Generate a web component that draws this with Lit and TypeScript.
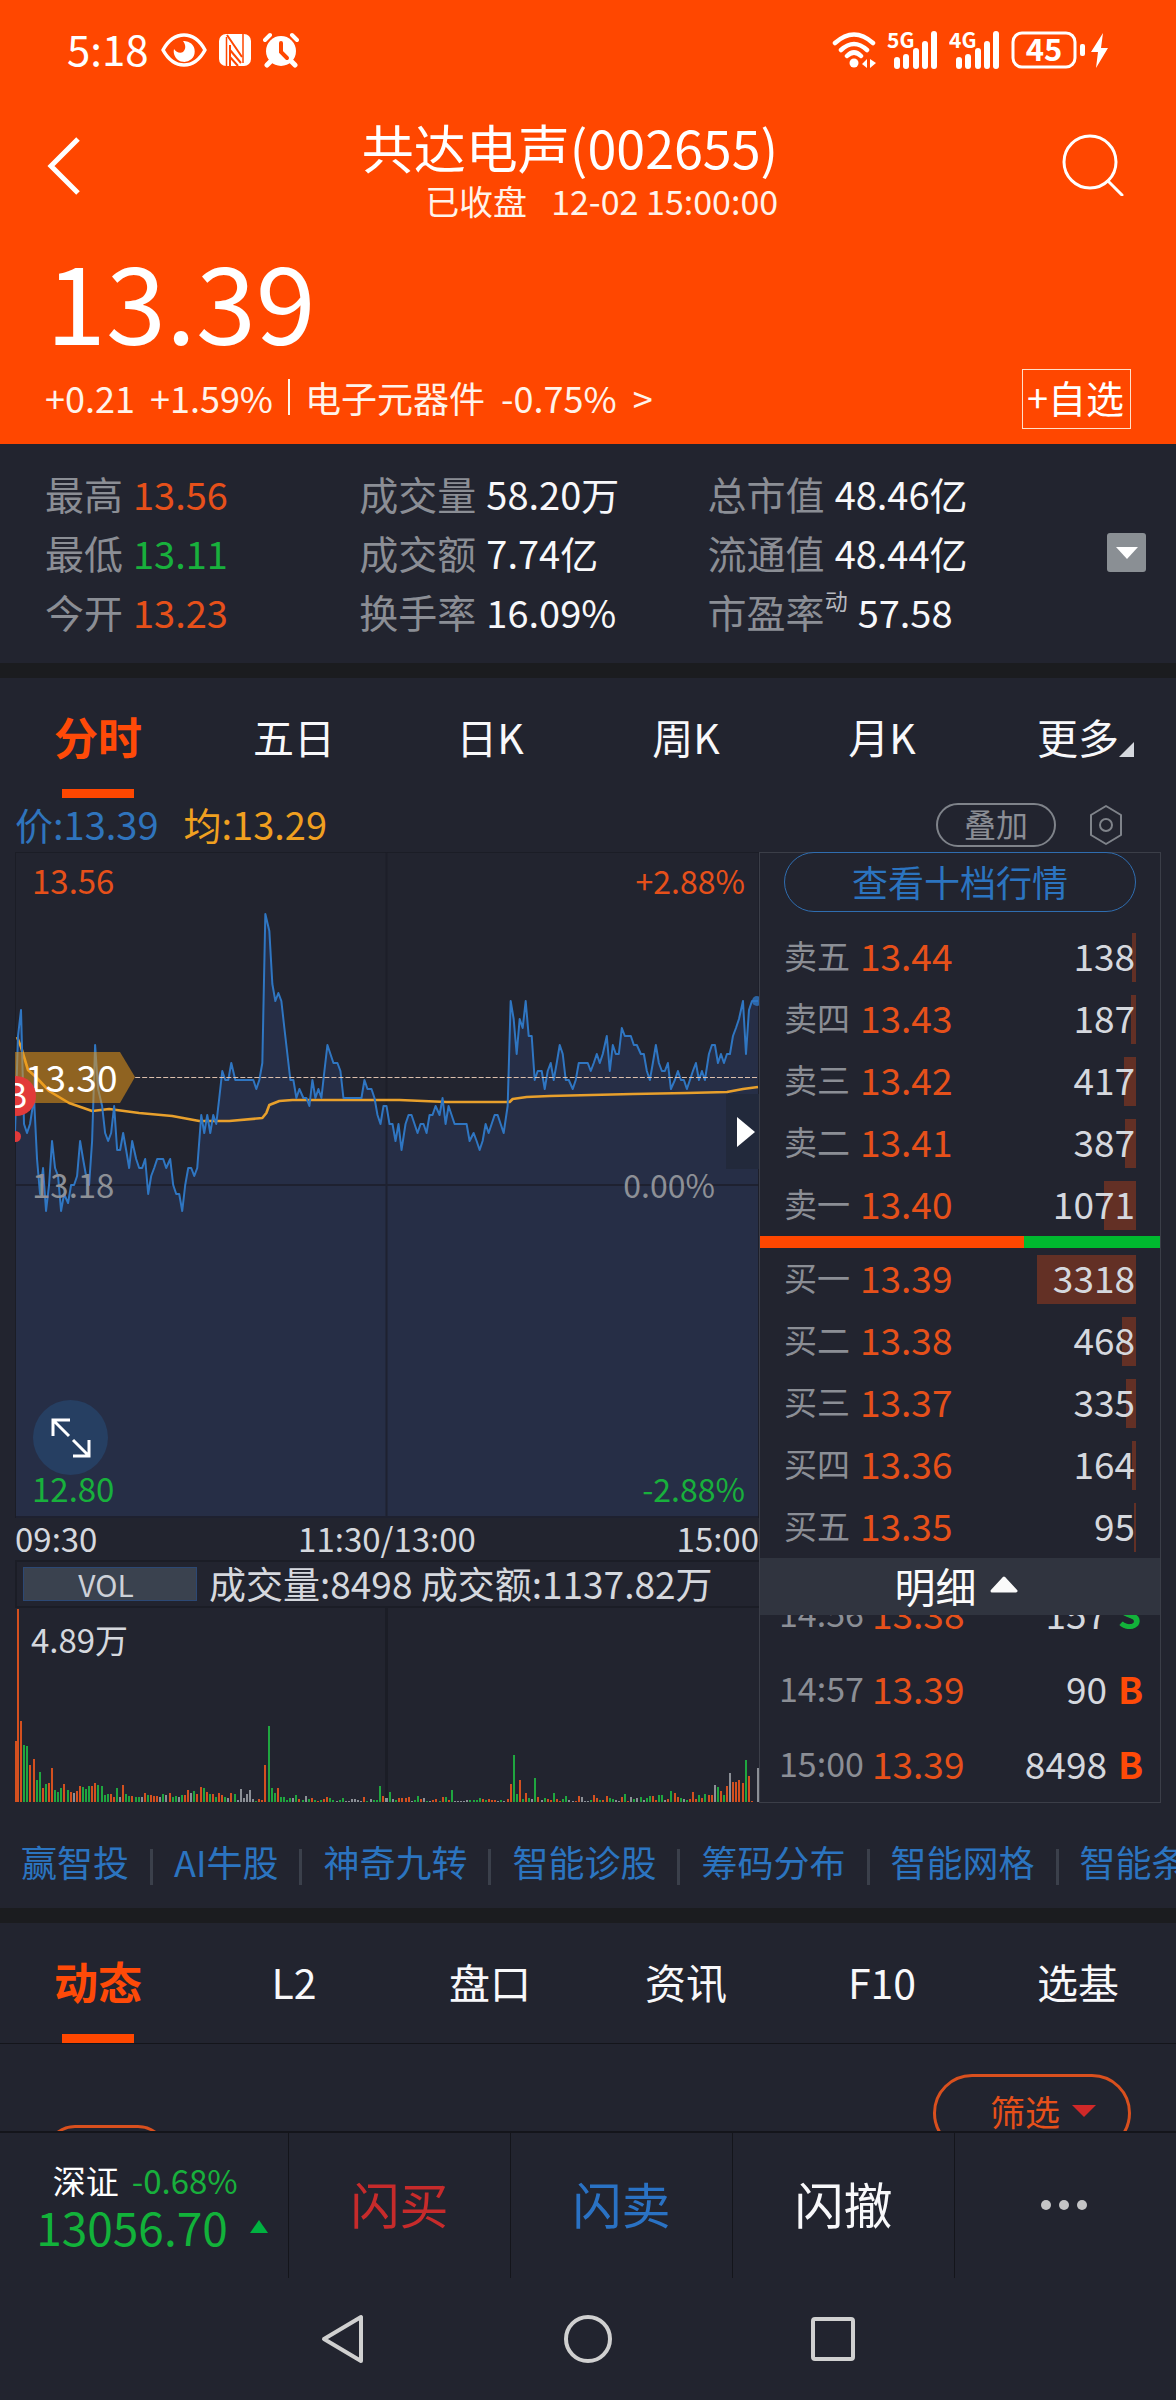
import { LitElement, html, css, svg } from "lit";
import { customElement, state } from "lit/decorators.js";
import { classMap } from "lit/directives/class-map.js";

/** Price per minute, in cents above the previous close of 13.18. */
const TICKS = [
  6, 17, 20, 7, 6, 7, 10, 3, -1, 2, -3, 0, 5, 2, 1, -3, -1, -2, 0, 0, 1, 5, 3, 1, 0, 5, 16, 11, 9, 6,
  5, 6, 9, 4, 4, 6, 4, 2, 5, 3, 2, 2, 3, -1, 1, 2, 3, 3, 3, 2, 3, 0, -1, -1, -3, 0, 2, 2, 1, 2,
  8, 6, 8, 6, 8, 7, 10, 13, 12, 12, 14, 12, 12, 12, 12, 12, 12, 12, 11, 12, 14, 31, 29, 23, 21, 22, 21, 18, 15, 12,
  12, 10, 11, 10, 10, 9, 12, 10, 11, 10, 13, 16, 15, 14, 14, 13, 10, 10, 10, 10, 10, 10, 10, 12, 11, 11, 10, 8, 7, 9,
  9, 7, 7, 5, 7, 4, 7, 8, 8, 7, 6, 7, 7, 6, 8, 8, 9, 8, 10, 7, 9, 8, 7, 7, 7, 7, 7, 5, 6, 5,
  4, 5, 7, 6, 7, 8, 8, 7, 6, 9, 21, 19, 15, 19, 18, 21, 17, 17, 12, 13, 13, 11, 13, 14, 12, 14, 16, 15, 12, 12,
  11, 12, 14, 14, 14, 14, 13, 14, 15, 14, 15, 17, 13, 16, 15, 15, 18, 17, 17, 17, 16, 16, 15, 15, 13, 12, 14, 16, 14, 13,
  13, 14, 11, 12, 13, 12, 12, 11, 12, 13, 14, 12, 13, 12, 15, 16, 16, 14, 15, 14, 15, 15, 17, 18, 19, 21, 15, 20, 21, 21, 21,
];

/** Average price line, in chart units. */
const AVERAGE =
  "2,185 6,195 13,218 21,225 34,239 54,251 77,259 94,257 124,261 157,264 184,269 214,269 247,266 251,261 254,253 264,249 277,248 384,248 431,250 494,250 497,247 511,245 534,244 617,242 671,241 711,240 727,237 742,235";

/** Volume per minute: direction (r up, g down, w flat) and bar height. */
const VOLUME = (
  "r61 r193 r81 g57 g56 r37 r43 g22 g30 r14 g18 r19 r34 g12 g10 g14 r18 g12 r10 w9 r11 r16 g15 g13 g16 r16 r19 g17 g16 g7 " +
  "g8 r8 r5 g14 w5 r17 g8 g6 r6 g5 g5 w5 r9 g7 r7 r6 r6 w5 g8 w7 r9 g5 g6 w5 g7 r7 r12 w9 g11 r8 " +
  "r15 g14 r10 g8 r8 g5 r9 r7 g5 w4 r9 g8 w2 w13 w4 w8 w12 w3 g1 r3 r2 r37 g76 g14 g9 r14 g5 g5 g2 g4 " +
  "w4 g7 r3 g2 w6 g3 r4 g2 r1 g2 r3 r5 g4 g2 w1 g2 g4 w1 w1 w3 w3 w2 w1 r5 g1 w3 g2 g2 g16 r6 " +
  "w4 g10 w3 g2 r4 r4 r4 r5 w1 g2 g6 r3 w4 g1 w1 r2 r3 g1 r5 g5 r2 g12 w1 w1 w1 w1 w2 g2 g2 g2 " +
  "g4 r3 g2 r3 r2 r2 w1 g2 w1 r3 r18 g47 g8 r22 g3 r9 g4 w3 g24 r5 w2 g4 r3 r2 g9 r3 r1 g3 g6 w2 " +
  "w1 r1 r6 w5 w1 w1 g2 r7 r4 g2 r2 r6 g4 g3 w2 w1 r5 g8 r1 w5 g3 w4 g5 w2 g4 g6 r6 r2 g7 g7 " +
  "w2 r3 g11 r9 r5 g4 w3 g2 r3 r10 r3 g7 r4 g8 r7 r7 w17 g15 r11 g7 r16 w29 r20 r20 r22 r19 g42 r26 r1 w0 w34"
).split(" ");

const BAR_COLORS: Record<string, string> = { r: "#d4501f", g: "#1fa63f", w: "#8b8f96" };

const STATS = [
  ["最高", "13.56", "up"], ["成交量", "58.20万", ""], ["总市值", "48.46亿", ""],
  ["最低", "13.11", "down"], ["成交额", "7.74亿", ""], ["流通值", "48.44亿", ""],
  ["今开", "13.23", "up"], ["换手率", "16.09%", ""], ["市盈率", "57.58", ""],
];

type Level = [string, string, number, number];
const ASKS: Level[] = [
  ["卖五", "13.44", 138, 4], ["卖四", "13.43", 187, 5], ["卖三", "13.42", 417, 12],
  ["卖二", "13.41", 387, 11], ["卖一", "13.40", 1071, 32],
];
const BIDS: Level[] = [
  ["买一", "13.39", 3318, 99], ["买二", "13.38", 468, 14], ["买三", "13.37", 335, 10],
  ["买四", "13.36", 164, 4], ["买五", "13.35", 95, 2],
];
const TRADES = [
  ["14:56", "13.38", "157", "S"],
  ["14:57", "13.39", "90", "B"],
  ["15:00", "13.39", "8498", "B"],
];

const base = css`
  :host { display: block; }
  * { box-sizing: border-box; }
  button, a {
    font: inherit; color: inherit; background: none; border: 0; padding: 0; margin: 0;
    text-decoration: none; white-space: nowrap;
  }
  svg { display: block; }
  .up { color: #e6501a; }
  .down { color: #18b03c; }
`;

@customElement("status-bar")
class StatusBar extends LitElement {
  static styles = [base, css`
    .bar { display: flex; justify-content: space-between; align-items: center; height: 100px; padding: 0 67px; color: #fff; }
    .side { display: flex; align-items: center; }
    .left { gap: 12px; }
    .right { gap: 11px; }
    .time { font-size: 42px; line-height: 48px; padding-bottom: 4px; }
    .small { font-family: "Noto Sans CJK SC", sans-serif; font-size: 21px; font-weight: 700; }
    .level { font-family: "Noto Sans CJK SC", sans-serif; font-size: 31px; font-weight: 700; }
  `];

  private signal(name: string) {
    return html`<svg width="51" height="40" viewBox="0 0 51 40" fill="#fff">
      <text class="small" x="0" y="18">${name}</text>
      <rect x="7" y="27" width="6" height="12" rx="3" />
      <rect x="16" y="24" width="6" height="15" rx="3" />
      <rect x="26" y="18" width="6" height="21" rx="3" />
      <rect x="35" y="11" width="6" height="28" rx="3" />
      <rect x="44" y="1" width="6" height="38" rx="3" />
    </svg>`;
  }

  render() {
    return html`<div class="bar">
      <div class="side left">
        <span class="time">5:18</span>
        <svg width="46" height="36" viewBox="0 0 46 36">
          <path d="M2 18C8 7 15 3 23 3s15 4 21 15C38 29 31 33 23 33S8 29 2 18Z" fill="none" stroke="#fff" stroke-width="3.500" stroke-linejoin="round" />
          <path d="M22 9a10.500 10.500 0 1 1-9 8c2 3 6 5 9 3 3-3 3-7 0-11Z" fill="#fff" />
        </svg>
        <svg width="32" height="34" viewBox="0 0 32 34">
          <rect y="1" width="32" height="32" rx="7" fill="#fff" />
          <path d="M7.500 4v29M24 1v29" stroke="#ff4700" stroke-width="1.500" />
          <path d="M8 2l15 22M11 17l11 13M11 24l8 9M11 12v21" stroke="#ff4700" stroke-width="2" fill="none" />
        </svg>
        <svg width="36" height="36" viewBox="0 0 36 36">
          <circle cx="18" cy="19" r="15" fill="#fff" />
          <path d="M2 8l5-5M34 8l-5-5" stroke="#fff" stroke-width="4" stroke-linecap="round" />
          <path d="M8 29l-4 4M28 29l4 4" stroke="#fff" stroke-width="5" stroke-linecap="round" />
          <path d="M18 11v9l6 6" stroke="#ff4700" stroke-width="4" fill="none" stroke-linecap="round" />
        </svg>
      </div>
      <div class="side right">
        <svg width="44" height="38" viewBox="0 0 44 38" fill="none" stroke="#fff" stroke-width="4.500" stroke-linecap="round">
          <path d="M3 12q19-17 38 0M9 19q13-12 26 0M15 25q7-7 14 0" />
          <circle cx="22" cy="32" r="4.500" fill="#fff" stroke="none" />
          <path d="M35 28v9l-5-4ZM38 37v-9l6 4Z" fill="#fff" stroke="none" />
        </svg>
        ${this.signal("5G")} ${this.signal("4G")}
        <svg width="98" height="38" viewBox="0 0 98 38">
          <rect x="2" y="2" width="62" height="34" rx="9" fill="none" stroke="#fff" stroke-width="3" />
          <text class="level" x="33" y="30" text-anchor="middle" fill="#fff">45</text>
          <rect x="69" y="13" width="5" height="12" rx="2" fill="#fff" />
          <path d="M92 2 80 21h7l-2 16 12-20h-7Z" fill="#fff" />
        </svg>
      </div>
    </div>`;
  }
}

@customElement("stock-head")
class StockHead extends LitElement {
  static styles = [base, css`
    .head { background: #ff4700; color: #fff; padding-bottom: 15px; }
    .title-row { display: flex; justify-content: space-between; align-items: center; height: 120px; margin-top: 5px; padding: 0 52px 0 46px; }
    .title { display: flex; flex-direction: column; align-items: flex-end; padding: 8px 4px 0 0; }
    h1 { margin: 0; font-size: 52px; line-height: 64px; font-weight: 400; }
    .session { display: flex; gap: 24px; font-size: 34px; line-height: 44px; color: #fff3ea; }
    .price { font-size: 108px; line-height: 112px; padding: 17px 0 0 46px; }
    .foot { display: flex; justify-content: space-between; align-items: center; margin-top: 15px; padding: 0 45px; }
    .change { display: flex; align-items: center; gap: 15px; font-size: 36px; line-height: 50px; color: #fff3ea; padding-bottom: 5px; }
    .rule { width: 2px; height: 36px; background: #fff3ea; }
    .sector { display: flex; gap: 16px; }
    .add { height: 60px; padding: 0 6px 4px 4px; border: 1px solid #ffe0c8; font-size: 38px; line-height: 54px; }
  `];

  render() {
    return html`<header class="head">
      <status-bar></status-bar>
      <div class="title-row">
        <button aria-label="返回">
          <svg width="36" height="60" viewBox="0 0 36 60"><path d="M32 4 5 31l27 27" fill="none" stroke="#fff" stroke-width="5" /></svg>
        </button>
        <div class="title">
          <h1>共达电声(002655)</h1>
          <div class="session"><span>已收盘</span><span>12-02 15:00:00</span></div>
        </div>
        <button aria-label="搜索">
          <svg width="62" height="62" viewBox="0 0 62 62" fill="none" stroke="#fff" stroke-width="3" stroke-linecap="round">
            <circle cx="28" cy="28" r="26" /><path d="m46 47 14 14" />
          </svg>
        </button>
      </div>
      <div class="price">13.39</div>
      <div class="foot">
        <div class="change">
          <span>+0.21</span><span>+1.59%</span><span class="rule"></span>
          <a class="sector" href="#sector"><span>电子元器件</span><span>-0.75%</span><span>&gt;</span></a>
        </div>
        <button class="add">+自选</button>
      </div>
    </header>`;
  }
}

@customElement("stock-stats")
class StockStats extends LitElement {
  static styles = [base, css`
    .wrap { display: flex; align-items: center; justify-content: space-between; padding: 20px 30px 22px 45px; border-bottom: 15px solid #1b1c1f; }
    dl { flex: 1; display: grid; grid-template-columns: 314fr 348fr 399fr; margin: 0; }
    .item { display: flex; gap: 10px; font-size: 39px; line-height: 59px; white-space: nowrap; }
    dt { display: flex; color: #8b8e95; }
    sup { font-size: 23px; line-height: 36px; color: #b6b9bf; vertical-align: top; }
    dd { margin: 0; font-size: 38px; color: #f8f8fa; }
    dd.up { color: #e6501a; }
    dd.down { color: #18b03c; }
    .more { width: 39px; height: 39px; border-radius: 3px; background: #8a8f94; display: grid; place-items: center; }
  `];

  render() {
    return html`<section class="wrap">
      <dl>
        ${STATS.map(([k, v, c]) => html`<div class="item">
          <dt>${k}${k === "市盈率" ? html`<sup>动</sup>` : ""}</dt><dd class=${c}>${v}</dd>
        </div>`)}
      </dl>
      <button class="more" aria-label="展开">
        <svg width="22" height="12" viewBox="0 0 22 12"><path d="M0 0h22L11 12Z" fill="#fff" /></svg>
      </button>
    </section>`;
  }
}

@customElement("tab-strip")
class TabStrip extends LitElement {
  static properties = { tabs: { attribute: false }, active: { state: true } };
  declare tabs: string[];
  declare active: number;
  constructor() {
    super();
    this.tabs = [];
    this.active = 0;
  }

  static styles = [base, css`
    .strip { display: grid; grid-auto-flow: column; grid-auto-columns: 1fr; height: 120px; }
    .tab { position: relative; font-size: 41px; line-height: 60px; color: #f8f8fa; padding-bottom: 4px; }
    .on { color: #ff4a08; font-size: 44px; font-weight: 700; }
    .on::after { content: ""; position: absolute; left: 50%; bottom: 0; width: 72px; height: 9px; margin-left: -36px; background: #ff4700; }
    .label { position: relative; }
    .corner { position: absolute; right: -15px; bottom: 9px; }
  `];

  render() {
    return html`<div class="strip" role="tablist">
      ${this.tabs.map((t, i) => html`<button
        role="tab" aria-selected=${i === this.active ? "true" : "false"}
        class=${classMap({ tab: true, on: i === this.active })}
        @click=${() => (this.active = i)}
      ><span class="label">${t}${t === "更多"
        ? html`<svg class="corner" width="15" height="15" viewBox="0 0 15 15"><path d="M15 0v15H0Z" fill="#d5d8de" /></svg>`
        : ""}</span></button>`)}
    </div>`;
  }
}

@customElement("minute-chart")
class MinuteChart extends LitElement {
  static styles = [base, css`
    .plot { position: relative; height: 666px; overflow: hidden; }
    .plot svg.lines, .volume svg { width: 100%; height: 100%; }
    .mark { position: absolute; font-size: 33px; line-height: 40px; color: #8d9096; }
    .mark.up { color: #e6501a; }
    .mark.down { color: #18b03c; }
    .high { top: 8px; }
    .mid { top: 312px; }
    .low { bottom: 10px; }
    .start { left: 17px; }
    .end { right: 14px; font-size: 32px; }
    .mid.end { right: 44px; }
    .tag { position: absolute; left: 0; top: 200px; }
    .tag-text { position: absolute; left: 10px; top: 200px; font-size: 37px; line-height: 48px; color: #fff; }
    .badge { position: absolute; left: -19px; top: 224px; width: 40px; height: 40px; border-radius: 50%; background: #e23a3a; color: #fff; font-size: 34px; line-height: 36px; text-align: center; }
    .dot { position: absolute; left: -5px; top: 279px; width: 11px; height: 11px; border-radius: 50%; background: #e23a3a; }
    .play { position: absolute; right: 0; top: 242px; width: 33px; height: 75px; padding-right: 4px; background: #22293b; display: grid; align-items: center; justify-items: end; }
    .expand { position: absolute; left: 18px; bottom: 43px; width: 75px; height: 75px; border-radius: 50%; background: #263f62; display: grid; place-items: center; }
    .axis { display: flex; justify-content: space-between; height: 42px; font-size: 33px; line-height: 41px; color: #d5d8de; }
    .info { display: flex; align-items: center; gap: 12px; height: 48px; padding-left: 6px; border: 2px solid #1b1d26; border-right: 0; font-size: 37px; line-height: 40px; color: #d5d8de; white-space: nowrap; }
    .info span { padding-bottom: 3px; }
    .vol { width: 174px; height: 34px; padding-right: 8px; border: 1px solid #2c4874; background: #3a424f; font-size: 30px; line-height: 28px; color: #cdd1d8; }
    .volume { position: relative; height: 195px; }
    .peak { position: absolute; left: 16px; top: 11px; font-size: 33px; line-height: 40px; color: #d5d8de; }
  `];

  render() {
    const step = 742 / 240;
    const pts = TICKS.map((t, i) => `${Math.round(i * step)},${Math.round(333 - t * 8.75)}`).join(" ");
    return html`
      <div class="plot">
        <svg class="lines" viewBox="0 0 743 666" preserveAspectRatio="none">
          <polygon points="0,666 ${pts} 742,666" fill="#262e46" />
          <path d="M0 .5h743M.5 0v666M743 0v666" stroke="#1b1d26" fill="none" />
          <path d="M371 0v666M0 333h743M0 665h743" stroke="#1b1d26" stroke-opacity=".7" stroke-width="2" fill="none" />
          <polyline points=${AVERAGE} fill="none" stroke="#e8a02c" stroke-width="2.600" stroke-linejoin="round" />
          <polyline points=${pts} fill="none" stroke="#2f76c2" stroke-width="2" stroke-linejoin="round" />
          <path d="M120 225.500h622" stroke="#dcbfac" stroke-dasharray="5 2" fill="none" />
          <circle cx="741" cy="149" r="5" fill="#2f76c2" fill-opacity=".8" />
        </svg>
        <svg class="tag" width="120" height="51" viewBox="0 0 120 51"><path d="M0 0h105l15 25-15 26H0Z" fill="#f09a14" fill-opacity=".53" /></svg>
        <span class="tag-text">13.30</span>
        <span class="badge">B</span><span class="dot"></span>
        <span class="mark up high start">13.56</span><span class="mark up high end">+2.88%</span>
        <span class="mark mid start">13.18</span><span class="mark mid end">0.00%</span>
        <span class="mark down low start">12.80</span><span class="mark down low end">-2.88%</span>
        <button class="play" aria-label="收起盘口">
          <svg width="18" height="30" viewBox="0 0 18 30"><path d="M0 0v30l18-15Z" fill="#fff" /></svg>
        </button>
        <button class="expand" aria-label="全屏">
          <svg width="40" height="40" viewBox="0 0 40 40" fill="none" stroke="#fff" stroke-width="3">
            <path d="M2 18V2h17M2 2l16 16M22 38h16V22M38 38 22 22" />
          </svg>
        </button>
      </div>
      <div class="axis"><span>09:30</span><span>11:30/13:00</span><span>15:00</span></div>
      <div class="info"><button class="vol">VOL</button><span>成交量:8498 成交额:1137.82万</span></div>
      <div class="volume">
        <svg viewBox="0 0 743 195" preserveAspectRatio="none" shape-rendering="crispEdges">
          <path d="M371 0v195" stroke="#1b1d26" stroke-width="2" />
          ${VOLUME.map((v, i) => {
            const h = Number(v.slice(1));
            return svg`<rect x=${Math.max(0, Math.round(i * step) - 1)} y=${194 - h} width="2" height=${h} fill=${BAR_COLORS[v[0]]} />`;
          })}
        </svg>
        <span class="peak">4.89万</span>
      </div>`;
  }
}

@customElement("order-book")
class OrderBook extends LitElement {
  static styles = [base, css`
    :host { display: flex; }
    .panel { flex: 1; display: flex; flex-direction: column; min-width: 0; border: 1px solid #3b3e48; }
    .ten { height: 60px; margin: -1px 24px 14px; border: 1px solid #2f6db0; border-radius: 30px; font-size: 36px; line-height: 54px; padding-bottom: 3px; color: #2b74c0; }
    table { width: 100%; border-collapse: collapse; }
    td { padding: 0; white-space: nowrap; }
    .book td { height: 62px; font-size: 37px; line-height: 48px; padding-bottom: 4px; }
    .book .name { width: 100px; padding-left: 24px; font-size: 33px; color: #8b8e95; }
    .book .qty { position: relative; padding-right: 25px; text-align: right; color: #d5d8de; }
    .qty .bar { position: absolute; right: 24px; top: 7px; height: 49px; background: #633025; }
    .qty .num { position: relative; }
    .ratio { display: flex; height: 12px; background: #00b92f; }
    .ratio .sell { width: 66%; background: #ff4700; }
    .fold { height: 57px; background: #30343f; color: #fafafa; font-size: 41px; line-height: 50px; display: flex; justify-content: center; align-items: center; gap: 13px; padding: 0 8px 4px 0; }
    .trades { flex: 1 1 0; min-height: 0; overflow: hidden; display: flex; flex-direction: column; justify-content: flex-end; }
    .trades td { height: 75px; font-size: 37px; line-height: 48px; padding-bottom: 4px; }
    .trades .when { width: 112px; padding-left: 19px; font-size: 34px; color: #8b8e95; }
    .trades .amount { text-align: right; color: #d5d8de; }
    .trades .side { width: 53px; padding-left: 11px; font-weight: 700; color: #ff4a08; }
    .trades .side.sell { color: #12b23a; }
  `];

  private book(levels: Level[], label: string) {
    return html`<table class="book" aria-label=${label}>
      ${levels.map(([n, p, q, w]) => html`<tr>
        <td class="name">${n}</td><td class="up">${p}</td>
        <td class="qty"><span class="bar" style="width:${w}px"></span><span class="num">${q}</span></td>
      </tr>`)}
    </table>`;
  }

  render() {
    return html`<div class="panel">
      <button class="ten">查看十档行情</button>
      ${this.book(ASKS, "卖盘")}
      <div class="ratio"><div class="sell"></div></div>
      ${this.book(BIDS, "买盘")}
      <button class="fold">明细
        <svg width="28" height="17" viewBox="0 0 28 17"><path d="M14 2 26 15H2Z" fill="#fafafa" stroke="#fafafa" stroke-width="3" stroke-linejoin="round" /></svg>
      </button>
      <div class="trades"><table aria-label="成交明细">
        ${TRADES.map(([t, p, q, s]) => html`<tr>
          <td class="when">${t}</td><td class="up">${p}</td><td class="amount">${q}</td>
          <td class=${classMap({ side: true, sell: s === "S" })}>${s}</td>
        </tr>`)}
      </table></div>
    </div>`;
  }
}

@customElement("app-root")
class AppRoot extends LitElement {
  @state() private chartTabs = ["分时", "五日", "日K", "周K", "月K", "更多"];
  @state() private infoTabs = ["动态", "L2", "盘口", "资讯", "F10", "选基"];

  static styles = [base, css`
    :host {
      display: flex; flex-direction: column; min-height: 100vh; overflow: hidden;
      background: #22242f; color: #f8f8fa;
      font-family: "Noto Sans CJK SC", sans-serif;
    }
    .legend { display: flex; align-items: center; justify-content: space-between; height: 54px; padding: 0 53px 0 15px; font-size: 38px; line-height: 48px; }
    .values { display: flex; gap: 25px; padding-bottom: 3px; }
    .now { color: #2f74bd; }
    .avg { color: #f0a020; }
    .tools { display: flex; align-items: center; gap: 33px; }
    .overlay { width: 120px; height: 44px; border: 2px solid #7f838a; border-radius: 22px; color: #8b8e95; font-size: 32px; line-height: 36px; padding-bottom: 4px; }
    .charts { display: grid; grid-template-columns: 744fr 402fr; padding: 0 15px; }
    .links { display: flex; height: 120px; padding: 15px 0 0 21px; overflow: hidden; border-bottom: 15px solid #1b1c1f; align-items: center; font-size: 36px; line-height: 48px; color: #2b74c0; }
    .links a { padding-bottom: 4px; }
    .links a + a::before { content: ""; display: inline-block; vertical-align: middle; width: 3px; height: 36px; margin: 0 21px; background: #3b404b; }
    .feed { flex: 1 1 0; min-height: 88px; overflow: hidden; border-top: 1px solid #14151b; display: flex; justify-content: space-between; align-items: flex-start; padding: 0 45px; }
    .chip { width: 123px; height: 60px; margin-top: 81px; border: 3px solid #d9501e; border-radius: 30px; }
    .filter { display: flex; align-items: center; justify-content: center; gap: 12px; width: 198px; height: 78px; margin-top: 30px; padding: 0 0 4px 22px; border: 3px solid #d9501e; border-radius: 39px; color: #e6501a; font-size: 35px; line-height: 48px; }
    .trade { display: grid; grid-template-columns: 289fr 222fr 222fr 222fr 221fr; height: 147px; border-top: 2px solid #14151b; }
    .cell { display: flex; align-items: center; justify-content: center; border-right: 1px solid #14151b; font-size: 49px; line-height: 60px; padding-bottom: 6px; }
    .cell:last-child { border-right: 0; padding: 0 3px 1px 0; }
    .buy { color: #c72b2b; }
    .sell { color: #2a72c4; }
    .index { gap: 22px; padding: 0 16px 0 32px; }
    .quote { display: flex; flex-direction: column; align-items: flex-end; }
    .name { display: flex; gap: 13px; margin-right: -10px; font-size: 33px; line-height: 40px; color: #fff; }
    .value { font-size: 46px; line-height: 52px; color: #12b23a; }
    .nav { display: flex; justify-content: center; align-items: center; gap: 199px; height: 122px; }
  `];

  render() {
    return html`
      <stock-head></stock-head>
      <stock-stats></stock-stats>
      <tab-strip .tabs=${this.chartTabs}></tab-strip>
      <div class="legend">
        <div class="values"><span class="now">价:13.39</span><span class="avg">均:13.29</span></div>
        <div class="tools">
          <button class="overlay">叠加</button>
          <button aria-label="设置">
            <svg width="34" height="42" viewBox="0 0 34 42" fill="none" stroke="#7f838a" stroke-width="2">
              <path d="M17 2 32 11v20L17 40 2 31V11Z" stroke-linejoin="round" /><circle cx="17" cy="21" r="6" />
            </svg>
          </button>
        </div>
      </div>
      <section class="charts"><minute-chart></minute-chart><order-book></order-book></section>
      <nav class="links">
        ${["赢智投", "AI牛股", "神奇九转", "智能诊股", "筹码分布", "智能网格", "智能条件单"].map((t) => html`<a href="#tool">${t}</a>`)}
      </nav>
      <tab-strip .tabs=${this.infoTabs}></tab-strip>
      <section class="feed">
        <button class="chip" aria-label="全部"></button>
        <button class="filter">筛选<svg width="24" height="12" viewBox="0 0 24 12"><path d="M0 0h24L12 12Z" fill="#d02828" /></svg></button>
      </section>
      <div class="trade">
        <button class="cell index">
          <span class="quote">
            <span class="name"><span>深证</span><span class="down">-0.68%</span></span>
            <span class="value">13056.70</span>
          </span>
          <svg width="18" height="58" viewBox="0 0 18 58"><path d="M9 43l9 13H0Z" fill="#00b140" /></svg>
        </button>
        <button class="cell buy">闪买</button>
        <button class="cell sell">闪卖</button>
        <button class="cell">闪撤</button>
        <button class="cell" aria-label="更多操作">
          <svg width="46" height="10" viewBox="0 0 46 10" fill="#c4c4c6"><circle cx="5" cy="5" r="5" /><circle cx="23" cy="5" r="5" /><circle cx="41" cy="5" r="5" /></svg>
        </button>
      </div>
      <nav class="nav">
        <button aria-label="返回"><svg width="44" height="50" viewBox="0 0 44 50"><path d="M40 3v44L3 25Z" fill="none" stroke="#d0d0d0" stroke-width="4" stroke-linejoin="round" /></svg></button>
        <button aria-label="主页"><svg width="48" height="48" viewBox="0 0 48 48"><circle cx="24" cy="24" r="22" fill="none" stroke="#d0d0d0" stroke-width="4" /></svg></button>
        <button aria-label="最近任务"><svg width="44" height="44" viewBox="0 0 44 44"><rect x="2" y="2" width="40" height="40" rx="2" fill="none" stroke="#d0d0d0" stroke-width="4" /></svg></button>
      </nav>`;
  }
}
